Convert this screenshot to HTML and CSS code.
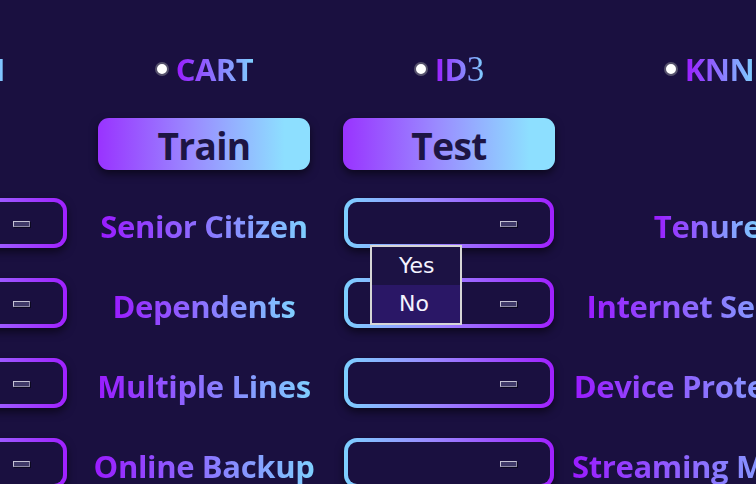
FILE: index.html
```html
<!DOCTYPE html>
<html lang="en">
<head>
<meta charset="utf-8">
<title>Churn Models</title>
<link rel="stylesheet" href="styles.css">
</head>
<body>
<div class="board">
  <div class="row radios">
    <div class="cell"><span class="radio"><span class="dot"></span><span class="grad">SVM</span></span></div>
    <div class="cell"><span class="radio"><span class="dot"></span><span class="grad">CART</span></span></div>
    <div class="cell"><span class="radio"><span class="dot"></span><span class="grad">ID<span class="serif">3</span></span></span></div>
    <div class="cell shift"><span class="radio"><span class="dot"></span><span class="grad">KNN</span></span></div>
  </div>
  <div class="row buttons">
    <div class="cell"></div>
    <div class="cell"><button class="btn">Train</button></div>
    <div class="cell"><button class="btn">Test</button></div>
    <div class="cell"></div>
  </div>
  <div class="fields">
    <div class="row field">
      <div class="cell"><div class="select"><div class="select-inner"><span class="ind"></span></div></div></div>
      <div class="cell"><span class="label">Senior Citizen</span></div>
      <div class="cell"><div class="select"><div class="select-inner"><span class="ind"></span></div>
        <div class="popup">
          <div class="opt">Yes</div>
          <div class="opt active">No</div>
        </div>
      </div></div>
      <div class="cell right"><span class="label">Tenure</span></div>
    </div>
    <div class="row field">
      <div class="cell"><div class="select"><div class="select-inner"><span class="ind"></span></div></div></div>
      <div class="cell"><span class="label">Dependents</span></div>
      <div class="cell"><div class="select"><div class="select-inner"><span class="ind"></span></div></div></div>
      <div class="cell right"><span class="label">Internet Service</span></div>
    </div>
    <div class="row field">
      <div class="cell"><div class="select"><div class="select-inner"><span class="ind"></span></div></div></div>
      <div class="cell"><span class="label">Multiple Lines</span></div>
      <div class="cell"><div class="select"><div class="select-inner"><span class="ind"></span></div></div></div>
      <div class="cell right"><span class="label">Device Protection</span></div>
    </div>
    <div class="row field">
      <div class="cell"><div class="select"><div class="select-inner"><span class="ind"></span></div></div></div>
      <div class="cell"><span class="label">Online Backup</span></div>
      <div class="cell"><div class="select"><div class="select-inner"><span class="ind"></span></div></div></div>
      <div class="cell right"><span class="label">Streaming Movies</span></div>
    </div>
  </div>
</div>
</body>
</html>
```
FILE: styles.css
```css
html, body {
  margin: 0;
  padding: 0;
  background: #1a1040;
  overflow: hidden;
  height: 100%;
}
body {
  font-family: "Open Sans", "Noto Sans", sans-serif;
}
.board {
  width: 992px;
  margin-left: -170px;
}
.row {
  display: grid;
  grid-template-columns: 264px 220px 270px 238px;
}
.cell {
  display: flex;
  justify-content: center;
  align-items: center;
  white-space: nowrap;
}
.cell.right {
  padding-left: 9px;
}
.radios {
  margin-top: 44px;
  height: 50px;
}
.shift {
  padding-left: 12px;
}
.radio {
  display: flex;
  align-items: center;
  gap: 7px;
}
.dot {
  width: 10px;
  height: 10px;
  border-radius: 50%;
  background: #ffffff;
  border: 2px solid #55516c;
  flex: none;
}
.grad {
  display: inline-block;
  font-size: 31px;
  font-weight: 700;
  letter-spacing: -0.5px;
  line-height: 40px;
  background: linear-gradient(90deg, #9a1bff 0%, #8a7cff 55%, #7fd0ff 100%);
  -webkit-background-clip: text;
  background-clip: text;
  color: transparent;
}
.serif {
  font-family: "Liberation Serif", serif;
  font-weight: 400;
  font-size: 35px;
  letter-spacing: 0;
}
.buttons {
  margin-top: 24px;
  height: 52px;
}
.btn {
  width: 212px;
  height: 52px;
  border: none;
  border-radius: 11px;
  background: linear-gradient(90deg, #9933ff 0%, #9a8cff 45%, #8ddfff 88%);
  box-shadow: 0 4px 8px rgba(0, 0, 0, 0.55);
  color: #1d1544;
  font-family: "Open Sans", "Noto Sans", sans-serif;
  font-weight: 700;
  font-size: 37px;
  letter-spacing: -0.6px;
  padding: 2px 0 0;
  display: flex;
  align-items: center;
  justify-content: center;
}
.fields {
  margin-top: 28px;
  display: flex;
  flex-direction: column;
  gap: 31px;
}
.field {
  height: 49px;
}
.select {
  position: relative;
  width: 210px;
  height: 50px;
  box-sizing: border-box;
  padding: 4px;
  border-radius: 13px;
  background: linear-gradient(90deg, #7dd0ff 0%, #9a8cff 40%, #a020ff 100%);
  box-shadow: 0 4px 8px rgba(0, 0, 0, 0.55);
}
.select-inner {
  height: 100%;
  border-radius: 9px;
  background: #1a1040;
  display: flex;
  align-items: center;
  justify-content: flex-end;
  padding: 2px 33px 0 0;
  box-sizing: border-box;
}
.ind {
  width: 15px;
  height: 4px;
  border: 1px solid #c4c2d4;
  border-right-color: #8e8aa6;
  border-bottom-color: #8e8aa6;
  background: #3f3968;
  box-shadow: 1px 1px 0 #0b0820;
}
.label {
  display: inline-block;
  font-size: 31px;
  font-weight: 700;
  letter-spacing: -0.35px;
  padding-top: 6px;
  background: linear-gradient(90deg, #9a1bff 0%, #8a7cff 55%, #7fd0ff 100%);
  -webkit-background-clip: text;
  background-clip: text;
  color: transparent;
}
.popup {
  position: absolute;
  left: 26px;
  top: 47px;
  width: 92px;
  height: 80px;
  box-sizing: border-box;
  border: 2px solid #d6d6d6;
  background: #1c1244;
  z-index: 10;
  font-family: "DejaVu Sans", sans-serif;
  font-size: 22px;
  color: #f4f4ff;
}
.opt {
  height: 38px;
  line-height: 38px;
  padding-left: 27px;
}
.opt.active {
  background: #2a1766;
}
```
